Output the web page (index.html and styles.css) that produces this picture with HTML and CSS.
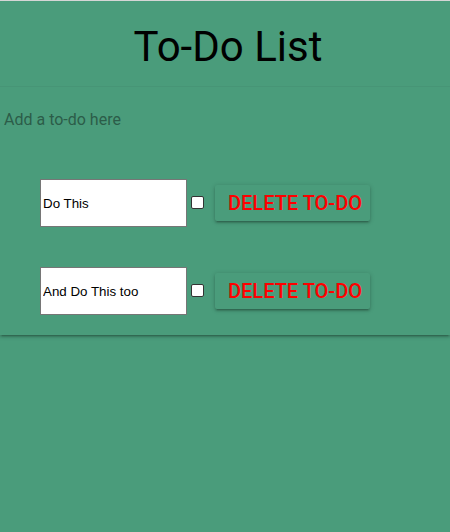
FILE: index.html
```html
<!DOCTYPE html>
<html>
<head>
<meta charset="utf-8">
<title>To-Do List</title>
<link rel="stylesheet" href="styles.css">
</head>
<body>
<div class="card">
  <header class="header">
    <h1 class="title">To-Do List</h1>
  </header>
  <div class="add">
    <input class="add-input" type="text" placeholder="Add a to-do here">
  </div>
  <ul class="list">
    <li class="row">
      <input class="item-input" type="text" value="Do This">
      <input class="check" type="checkbox">
      <button class="delete">Delete To-Do</button>
    </li>
    <li class="row">
      <input class="item-input" type="text" value="And Do This too">
      <input class="check" type="checkbox">
      <button class="delete">Delete To-Do</button>
    </li>
  </ul>
</div>
</body>
</html>
```
FILE: styles.css
```css
html, body {
  margin: 0;
  padding: 0;
  background: #4a9c7b;
  height: 100%;
}
body {
  border-top: 1px solid #d6d6d6;
  box-sizing: border-box;
  font-family: Roboto, "Liberation Sans", sans-serif;
}
.card {
  background: #4a9c7b;
  box-shadow: 0 2px 2px 0 rgba(0,0,0,0.14), 0 3px 1px -2px rgba(0,0,0,0.12), 0 1px 5px 0 rgba(0,0,0,0.2);
}
.header {
  height: 86px;
  border-bottom: 1px solid rgba(0,0,0,0.04);
  display: flex;
  align-items: center;
  justify-content: center;
  box-sizing: border-box;
  padding-top: 6px;
}
.title {
  margin: 0;
  padding-left: 6px;
  font-weight: 400;
  font-size: 42px;
  line-height: 48px;
  color: #000;
}
.add {
  height: 64px;
  display: flex;
  align-items: center;
  padding: 0 4px;
}
.add-input {
  border: none;
  background: transparent;
  outline: none;
  font-family: Roboto, sans-serif;
  font-size: 16px;
  padding: 0;
  width: 100%;
  color: #000;
}
.add-input::placeholder {
  color: #2c5c49;
  opacity: 1;
}
.list {
  list-style: none;
  margin: 0;
  padding: 28px 0 20px 40px;
  display: flex;
  flex-direction: column;
  gap: 40px;
}
.row {
  display: flex;
  align-items: center;
  height: 48px;
}
.item-input {
  box-sizing: border-box;
  width: 147px;
  height: 48px;
  border: 1px solid #767676;
  background: #fff;
  padding: 0 2px;
  font-family: "Liberation Sans", Arial, sans-serif;
  font-size: 13.33px;
  color: #000;
}
.check {
  -webkit-appearance: none;
  appearance: none;
  box-sizing: border-box;
  width: 13px;
  height: 13px;
  margin: 0 0 1px 4px;
  border: 1px solid #333;
  border-radius: 2px;
  background: #fff;
}
.delete {
  margin-left: 11px;
  width: 155px;
  height: 36px;
  border: none;
  border-radius: 2px;
  background: #4a9c7b;
  color: #ff0000;
  font-family: Roboto, sans-serif;
  font-weight: 500;
  font-size: 20px;
  text-transform: uppercase;
  padding: 0 8px 0 13px;
  white-space: nowrap;
  box-shadow: 0 2px 2px 0 rgba(0,0,0,0.14), 0 3px 1px -2px rgba(0,0,0,0.12), 0 1px 5px 0 rgba(0,0,0,0.2);
}
```
